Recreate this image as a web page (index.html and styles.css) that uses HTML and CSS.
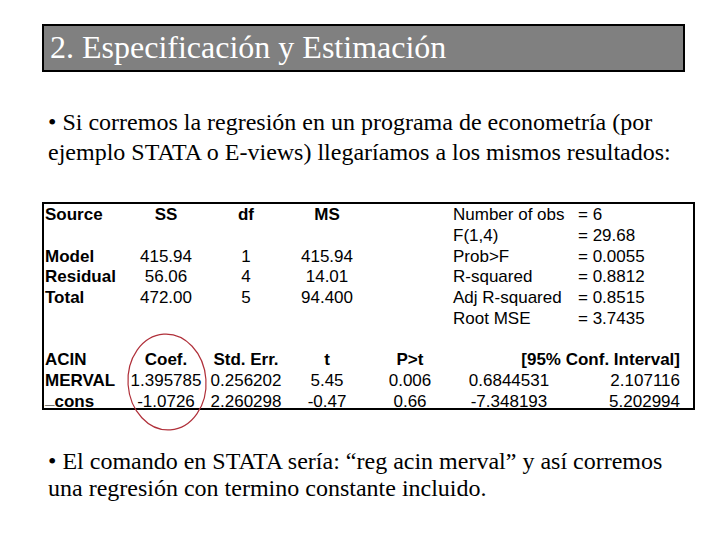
FILE: index.html
```html
<!DOCTYPE html>
<html lang="es">
<head>
<meta charset="utf-8">
<title>2. Especificación y Estimación</title>
<link rel="stylesheet" href="styles.css">
</head>
<body>
<div class="slide">
  <h1 class="title">2. Especificación y Estimación</h1>
  <p class="para para1">• Si corremos la regresión en un programa de econometría (por ejemplo STATA o E-views) llegaríamos a los mismos resultados:</p>
  <div class="output">
    <div class="grid top">
      <div class="b l">Source</div><div class="b c">SS</div><div class="b c">df</div><div class="b c">MS</div><div></div><div class="l">Number of obs</div><div class="l">= 6</div>
      <div></div><div></div><div></div><div></div><div></div><div class="l">F(1,4)</div><div class="l">= 29.68</div>
      <div class="b l">Model</div><div class="c">415.94</div><div class="c">1</div><div class="c">415.94</div><div></div><div class="l">Prob&gt;F</div><div class="l">= 0.0055</div>
      <div class="b l">Residual</div><div class="c">56.06</div><div class="c">4</div><div class="c">14.01</div><div></div><div class="l">R-squared</div><div class="l">= 0.8812</div>
      <div class="b l">Total</div><div class="c">472.00</div><div class="c">5</div><div class="c">94.400</div><div></div><div class="l">Adj R-squared</div><div class="l">= 0.8515</div>
      <div></div><div></div><div></div><div></div><div></div><div class="l">Root MSE</div><div class="l">= 3.7435</div>
    </div>
    <div class="grid bottom">
      <div class="b l">ACIN</div><div class="b c">Coef.</div><div class="b c">Std. Err.</div><div class="b c">t</div><div class="b c">P&gt;t</div><div class="b r span2">[95% Conf. Interval]</div>
      <div class="b l">MERVAL</div><div class="c">1.395785</div><div class="c">0.256202</div><div class="c">5.45</div><div class="c">0.006</div><div class="c">0.6844531</div><div class="r">2.107116</div>
      <div class="b l"><span class="us">_</span>cons</div><div class="c">-1.0726</div><div class="c">2.260298</div><div class="c">-0.47</div><div class="c">0.66</div><div class="c">-7.348193</div><div class="r">5.202994</div>
    </div>
    <svg class="circle" width="90" height="110" viewBox="0 0 90 110" aria-hidden="true">
      <ellipse cx="45" cy="55" rx="39" ry="48" fill="none" stroke="#b0303a" stroke-width="1.2" transform="rotate(-4 45 55)"/>
    </svg>
  </div>
  <p class="para para2">• El comando en STATA sería: “reg acin merval” y así corremos una regresión con termino constante incluido.</p>
</div>
</body>
</html>
```

FILE: styles.css
```css
html, body {
  margin: 0;
  padding: 0;
  background: #ffffff;
}

.slide {
  width: 720px;
  height: 540px;
  padding: 24px 0 0 42px;
  box-sizing: border-box;
  font-family: "Liberation Serif", "Times New Roman", serif;
  color: #000;
}

.title {
  margin: 0;
  width: 643px;
  height: 48px;
  box-sizing: border-box;
  border: 2px solid #000;
  background: #808080;
  color: #fff;
  font-weight: normal;
  font-size: 32px;
  line-height: 42px;
  padding-left: 6px;
  white-space: nowrap;
}

.para {
  margin: 0;
  font-size: 24px;
  padding-left: 6px;
  width: 660px;
  box-sizing: border-box;
}

.para1 {
  margin-top: 35px;
  line-height: 30px;
}

.output {
  position: relative;
  margin-top: 35px;
  width: 653px;
  height: 208px;
  box-sizing: border-box;
  border: 2px solid #000;
  font-family: "Liberation Sans", Arial, sans-serif;
  font-size: 17px;
  color: #000;
}

.grid {
  display: grid;
  grid-auto-rows: 20.7px;
  align-items: center;
  line-height: 20px;
}

.top {
  grid-template-columns: 82px 80px 80px 82px 84px 125px 1fr;
  margin-top: 1px;
}

.bottom {
  grid-template-columns: 82px 80px 80px 82px 84px 114px 114px;
  margin-top: 20.7px;
}

.b { font-weight: bold; }
.l { text-align: left; padding-left: 1px; white-space: nowrap; }
.c { text-align: center; white-space: nowrap; }
.r { text-align: right; white-space: nowrap; }
.span2 { grid-column: span 2; }

.us {
  display: inline-block;
  line-height: 10px;
  vertical-align: 3px;
}

.circle {
  position: absolute;
  left: 78px;
  top: 123px;
}

.para2 {
  margin-top: 38px;
  line-height: 27px;
}
```
